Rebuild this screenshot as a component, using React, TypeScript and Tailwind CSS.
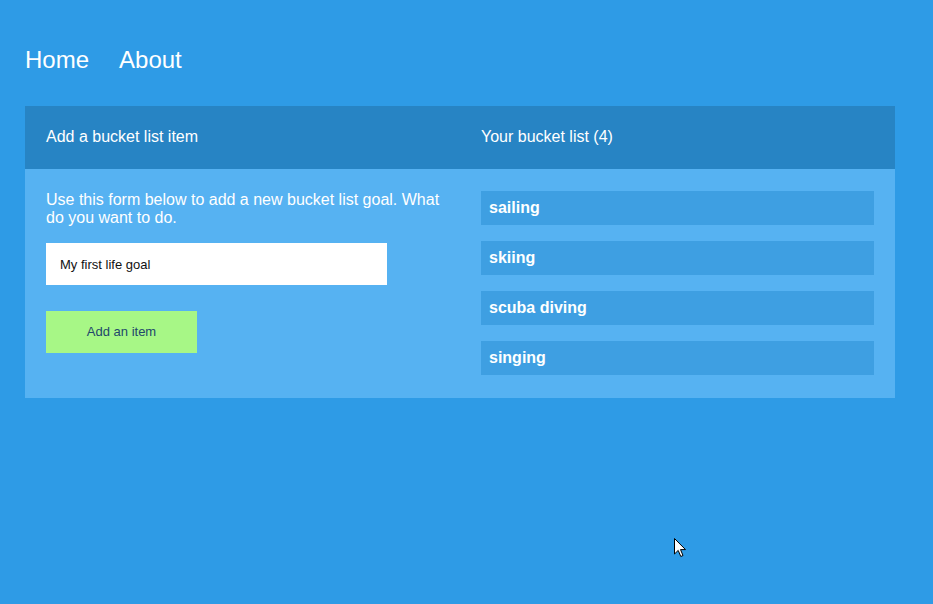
import React from "react";

const items = ["sailing", "skiing", "scuba diving", "singing"];

export default function App() {
  return (
    <div
      className="relative min-h-[604px] w-full bg-[#2e9be6] px-[25px] text-white"
      style={{ fontFamily: '"Liberation Sans", Arial, sans-serif' }}
    >
      <nav className="flex gap-[30px] pt-[46px] text-[24px] leading-[28px]">
        <a className="cursor-pointer">Home</a>
        <a className="cursor-pointer">About</a>
      </nav>

      <div className="mt-[32px] w-[870px]">
        <div className="grid h-[63px] grid-cols-2 items-center bg-[#2784c4] pb-[2px] text-[16px]">
          <div className="pl-[21px]">Add a bucket list item</div>
          <div className="pl-[21px]">Your bucket list ({items.length})</div>
        </div>
        <div className="grid grid-cols-2 bg-[#56b2f2]">
          <div className="pl-[21px] pr-[12px] pt-[22px]">
            <p className="text-[16px] leading-[18px]">
              Use this form below to add a new bucket list goal. What do you want to do.
            </p>
            <input
              className="mt-[16px] block h-[42px] w-[341px] bg-white px-[14px] text-[13px] text-[#111] outline-none"
              defaultValue="My first life goal"
            />
            <button className="mt-[26px] block h-[42px] w-[151px] bg-[#a7f786] text-[13px] text-[#22476b]">
              Add an item
            </button>
          </div>
          <div className="flex flex-col gap-[16px] px-[21px] pb-[23px] pt-[22px]">
            {items.map((it) => (
              <div
                key={it}
                className="flex h-[34px] items-center bg-[#3e9fe2] px-[8px] text-[16px] font-bold"
              >
                {it}
              </div>
            ))}
          </div>
        </div>
      </div>

      <svg
        className="absolute left-[674px] top-[538px]"
        width="13"
        height="20"
        viewBox="0 0 13 20"
      >
        <path
          d="M0.5 0.5 L0.5 16 L4.2 12.4 L6.8 18.5 L9 17.5 L6.5 11.6 L11.5 11.6 Z"
          fill="white"
          stroke="black"
          strokeWidth="1"
          strokeLinejoin="miter"
        />
      </svg>
    </div>
  );
}
